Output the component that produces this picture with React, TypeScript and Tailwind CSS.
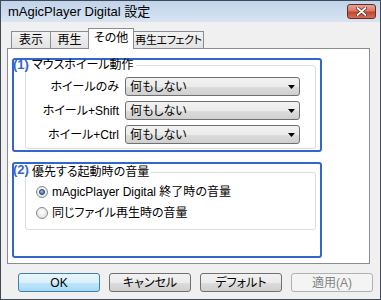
import React from "react";

const FONT = "font-['Liberation_Sans','Noto_Sans_CJK_JP',sans-serif] [font-feature-settings:'palt']";

function Combo() {
  return (
    <div className="flex h-[19px] w-[175px] items-center justify-between rounded-[3px] border border-[#707070] bg-[linear-gradient(#f2f2f2_0%,#ebebeb_50%,#dddddd_51%,#cfcfcf_100%)] pl-[4px] pr-[4px]">
      <span className="text-[12px] leading-none">何もしない</span>
      <svg width="7" height="4" viewBox="0 0 7 4">
        <path d="M0 0h7L3.5 4z" fill="#000" />
      </svg>
    </div>
  );
}

function Radio({ checked, label }: { checked?: boolean; label: string }) {
  return (
    <div className="flex h-[14px] items-center gap-[4px]">
      <div className="flex h-[12px] w-[12px] items-center justify-center rounded-full border border-[#8a8a8a] bg-[radial-gradient(circle_at_50%_40%,#ffffff,#d8d8d8)]">
        {checked ? (
          <div className="h-[6px] w-[6px] rounded-full border border-[#1c3f6e] bg-[radial-gradient(circle_at_40%_35%,#8fc3f0,#2a5fa8)]" />
        ) : null}
      </div>
      <span className="text-[12px] leading-none">{label}</span>
    </div>
  );
}

function Btn({ label, kind }: { label: string; kind?: "default" | "disabled" }) {
  const cls =
    kind === "default"
      ? "border-[#3c7fb1] bg-[linear-gradient(#eaf6fd_0%,#d9f0fc_50%,#bee6fd_51%,#a7d9f5_100%)] text-black"
      : kind === "disabled"
        ? "border-[#adb2b5] bg-[#f4f4f4] text-[#838383]"
        : "border-[#707070] bg-[linear-gradient(#f2f2f2_0%,#ebebeb_50%,#dddddd_51%,#cfcfcf_100%)] text-black";
  return (
    <div
      className={
        "flex h-[19px] w-[82px] items-center justify-center rounded-[3px] border text-[12px] leading-none " +
        cls
      }
    >
      {label}
    </div>
  );
}

export default function App() {
  return (
    <div className={"flex h-[300px] w-[381px] flex-col border border-[#404a56] bg-[#f0f0f0] text-black " + FONT}>
      {/* title bar */}
      <div className="flex h-[21px] items-center justify-between bg-[linear-gradient(#c0d3ea,#d8e4f2)] pl-[7px] pr-[4px]">
        <span className="text-[13px] leading-none">mAgicPlayer Digital 設定</span>
        <div className="flex h-[15px] w-[29px] items-center justify-center rounded-[3px] border border-[#6b2a22] bg-[linear-gradient(#e3a394_0%,#d77a6a_45%,#c1452f_55%,#d4705c_100%)]">
          <svg width="11" height="9" viewBox="0 0 11 9">
            <path d="M1.5 1l8 7M9.5 1l-8 7" stroke="#5a2018" strokeWidth="3.2" strokeLinecap="round" />
            <path d="M1.5 1l8 7M9.5 1l-8 7" stroke="#fff" strokeWidth="1.8" strokeLinecap="round" />
          </svg>
        </div>
      </div>

      {/* tabs */}
      <div className="ml-[10px] flex h-[26px] items-end whitespace-nowrap">
        <div className="flex h-[17px] w-[40px] items-center justify-center border border-b-0 border-[#898c95] bg-[linear-gradient(#f2f2f2,#e3e3e3)] text-[12px] leading-none">
          表示
        </div>
        <div className="flex h-[17px] w-[38px] items-center justify-center border border-b-0 border-l-0 border-[#898c95] bg-[linear-gradient(#f2f2f2,#e3e3e3)] text-[12px] leading-none">
          再生
        </div>
        <div className="relative z-10 -mb-px -ml-[1px] flex h-[21px] w-[46px] items-center justify-center border border-b-0 border-[#898c95] bg-white pb-[3px] text-[12px] leading-none">
          その他
        </div>
        <div className="flex h-[17px] w-[70px] items-center justify-center overflow-hidden border border-b-0 border-l-0 border-[#898c95] bg-[linear-gradient(#f2f2f2,#e3e3e3)] text-[11px] leading-none tracking-[-0.4px]">
          再生エフェクト
        </div>
      </div>

      {/* panel */}
      <div className="ml-[6px] flex h-[216px] w-[363px] flex-col border border-[#898c95] bg-white">
        {/* box 1 */}
        <div className="relative ml-[4px] mt-[9px] h-[94px] w-[310px] rounded-[3px] border-2 border-[#3366cc]">
          <span className="absolute left-[-1px] top-[-2px] text-[13px] font-bold leading-none text-[#3366cc]">(1)</span>
          <fieldset className="ml-[11px] mt-[-1px] w-[291px] rounded-[3px] border border-[#d5dfe5] pb-[4px]">
            <legend className="ml-[4px] px-[2px] text-[12px] leading-[12px]">マウスホイール動作</legend>
            <div className="mt-[6px] grid grid-cols-[93px_175px] items-center gap-x-[6px] gap-y-[5px]">
              <span className="text-right text-[12px] leading-none">ホイールのみ</span>
              <Combo />
              <span className="text-right text-[12px] leading-none">ホイール+Shift</span>
              <Combo />
              <span className="text-right text-[12px] leading-none">ホイール+Ctrl</span>
              <Combo />
            </div>
          </fieldset>
        </div>

        {/* box 2 */}
        <div className="relative ml-[4px] mt-[10px] h-[96px] w-[310px] rounded-[3px] border-2 border-[#3366cc]">
          <span className="absolute left-[-1px] top-[-1px] text-[13px] font-bold leading-none text-[#3366cc]">(2)</span>
          <fieldset className="ml-[11px] mt-[2px] w-[291px] rounded-[3px] border border-[#d5dfe5] pb-[9px]">
            <legend className="ml-[4px] px-[2px] text-[12px] leading-[12px]">優先する起動時の音量</legend>
            <div className="ml-[10px] mt-[7px] flex flex-col gap-[7px]">
              <Radio checked label="mAgicPlayer Digital 終了時の音量" />
              <Radio label="同じファイル再生時の音量" />
            </div>
          </fieldset>
        </div>
      </div>

      {/* buttons */}
      <div className="ml-[17px] mt-[9px] flex gap-[9px]">
        <Btn label="OK" kind="default" />
        <Btn label="キャンセル" />
        <Btn label="デフォルト" />
        <Btn label="適用(A)" kind="disabled" />
      </div>
    </div>
  );
}
